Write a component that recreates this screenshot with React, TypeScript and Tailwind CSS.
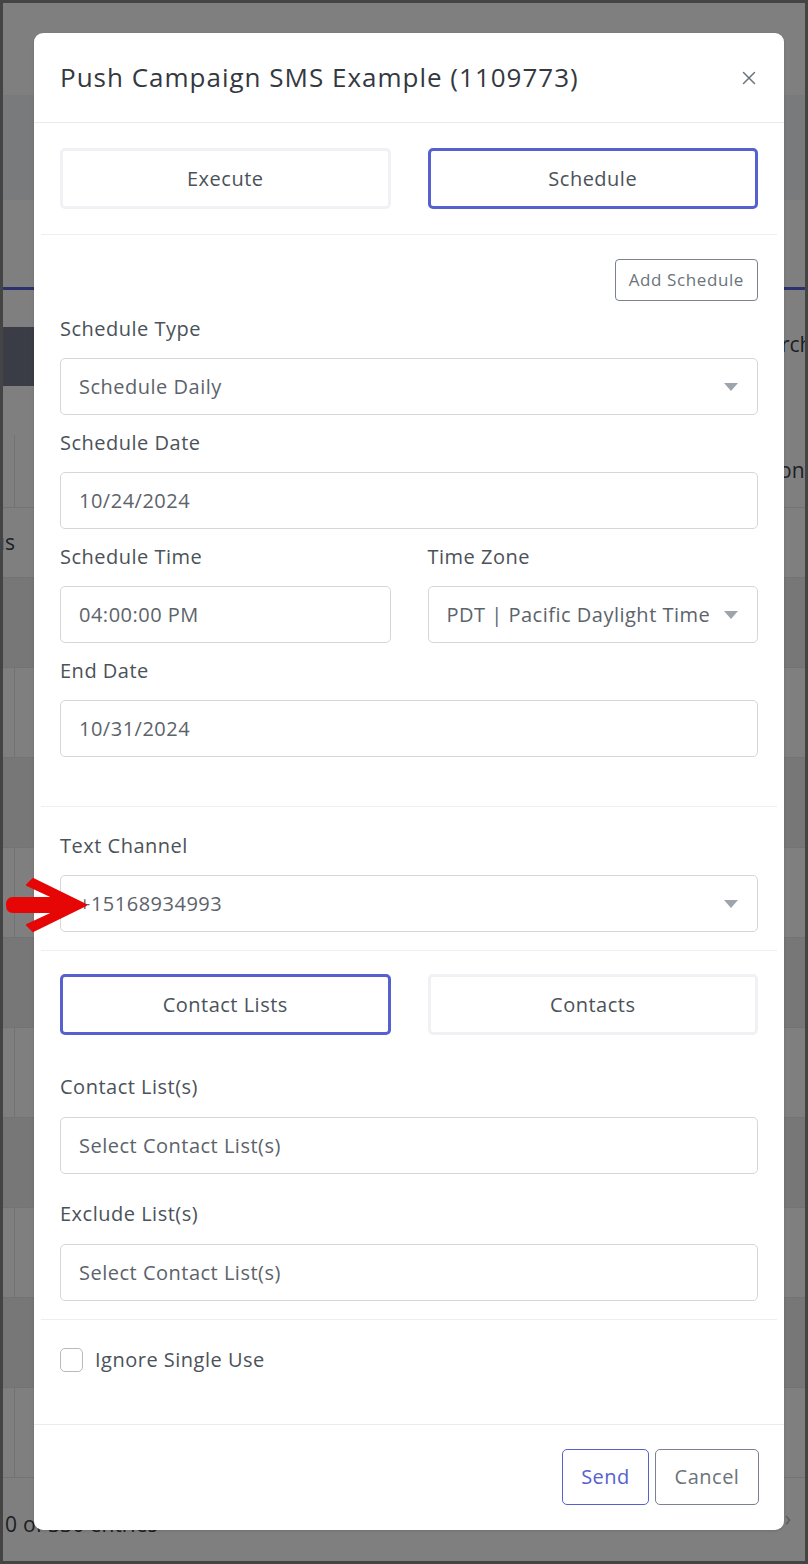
import { X } from "lucide-react";

const font = { fontFamily: "'Open Sans', Lato, sans-serif" };

function Caret() {
  return (
    <svg width="16" height="10" viewBox="0 0 16 10" className="shrink-0">
      <path d="M1 1 L15 1 L8 9 Z" fill="#9ea4ab" />
    </svg>
  );
}

function Label({ children, mb = "mb-[15px]" }: { children: React.ReactNode; mb?: string }) {
  return <div className={`${mb} text-[20px] leading-[28px] tracking-[0.5px] text-[#4b5259]`}>{children}</div>;
}

function Field({ value, select, className = "" }: { value: string; select?: boolean; className?: string }) {
  return (
    <div
      className={`flex h-[57px] items-center justify-between rounded-[5px] border border-[#d3d7dc] bg-white pl-[18px] pr-[18px] text-[20px] tracking-[0.5px] text-[#5c636b] ${className}`}
    >
      <span className="truncate">{value}</span>
      {select && <Caret />}
    </div>
  );
}

function ToggleButton({ label, active }: { label: string; active?: boolean }) {
  return (
    <button
      className={`h-[61px] flex-1 rounded-[5px] border-[3px] bg-white text-[20px] tracking-[0.5px] text-[#4b5259] ${
        active ? "border-[#5661cf]" : "border-[#eff1f4]"
      }`}
    >
      {label}
    </button>
  );
}

function Divider() {
  return <div className="mx-[7px] h-px bg-[#eceef1]" />;
}

function BgRow({ h, dark, line, children }: { h: number; dark?: boolean; line?: boolean; children?: React.ReactNode }) {
  return (
    <div
      className={`relative flex items-center border-b border-[#e4e6e9] text-[21px] text-[#3b4048] ${
        dark ? "bg-[#eeeff1]" : "bg-white"
      }`}
      style={{ height: h }}
    >
      {line && <div className="absolute left-[11px] top-0 h-full w-px bg-[#e2e4e7]" />}
      {children}
    </div>
  );
}

export default function App() {
  return (
    <div className="relative h-[1564px] w-[808px] overflow-hidden border-[3px] border-[#444444] bg-white" style={font}>
      {/* page behind the dialog */}
      <div className="flex flex-col">
        <div className="h-[92px] bg-white" />
        <div className="h-[105px] bg-[#f3f4f6]" />
        <div className="h-[87px] bg-white" />
        <div className="h-[3px] bg-[#5a60df]" />
        <div className="h-[37px] bg-white" />
        <div className="flex h-[59px] bg-white">
          <div className="flex h-full w-[40px] items-center bg-[#747b8a]">
            <div className="ml-[31px] h-[15px] w-[4px] bg-[#e0e4ea]" />
          </div>
          <span className="ml-[708px] mt-[2px] whitespace-nowrap text-[21px] text-[#3b4048]">Search</span>
        </div>
        <div className="h-[49px] bg-white" />
        <BgRow h={73} line>
          <span className="ml-[740px] whitespace-nowrap">Action</span>
        </BgRow>
        <BgRow h={70}>
          <div className="flex w-[12px] justify-end whitespace-nowrap">Status</div>
        </BgRow>
        <BgRow h={90} dark />
        <BgRow h={90} line />
        <BgRow h={90} dark />
        <BgRow h={90} line />
        <BgRow h={90} dark />
        <BgRow h={90} line />
        <BgRow h={90} dark />
        <BgRow h={90} line />
        <BgRow h={90} dark />
        <BgRow h={90} line />
        <div className="flex h-[80px] items-center bg-white pt-[14px] text-[21px] text-[#3b4048]">
          <div className="flex w-[14px] justify-end whitespace-nowrap">Showing 1 to 10</div>
          <span className="ml-[6px] whitespace-nowrap">of 330 entries</span>
          <span className="ml-auto mr-[14px] pb-[12px] text-[#b3b8bf]">›</span>
        </div>
      </div>

      {/* backdrop */}
      <div className="absolute inset-0 bg-black/50" />

      {/* dialog */}
      <div className="absolute left-[31px] top-[30px] w-[750px] rounded-[9px] bg-white shadow-sm">
        <div className="flex h-[90px] items-center justify-between border-b border-[#e9ecef] px-[26px]">
          <h2 className="text-[26px] tracking-[1px] text-[#33393f]">Push Campaign SMS Example (1109773)</h2>
          <X size={22} strokeWidth={1.6} className="mr-[-2px] text-[#6c737a]" />
        </div>

        <div className="flex gap-[37px] px-[26px] pb-[25px] pt-[25px]">
          <ToggleButton label="Execute" />
          <ToggleButton label="Schedule" active />
        </div>
        <Divider />

        <div className="px-[26px] pt-[24px] pb-[49px]">
          <div className="flex justify-end">
            <button className="h-[42px] rounded-[4px] border border-[#7b8190] px-[13px] text-[17px] tracking-[0.6px] text-[#6c737a]">
              Add Schedule
            </button>
          </div>
          <div className="mt-[14px]">
            <Label>Schedule Type</Label>
            <Field value="Schedule Daily" select className="h-[56px]" />
          </div>
          <div className="mt-[14px]">
            <Label>Schedule Date</Label>
            <Field value="10/24/2024" />
          </div>
          <div className="mt-[14px] flex gap-[37px]">
            <div className="flex-1">
              <Label>Schedule Time</Label>
              <Field value="04:00:00 PM" />
            </div>
            <div className="flex-1">
              <Label>Time Zone</Label>
              <Field value="PDT | Pacific Daylight Time" select className="h-[56px]" />
            </div>
          </div>
          <div className="mt-[14px]">
            <Label>End Date</Label>
            <Field value="10/31/2024" />
          </div>
        </div>
        <Divider />

        <div className="px-[26px] pb-[18px] pt-[25px]">
          <Label>Text Channel</Label>
          <Field value="+15168934993" select className="h-[56px]" />
        </div>
        <Divider />

        <div className="px-[26px] pb-[18px] pt-[23px]">
          <div className="flex gap-[37px]">
            <ToggleButton label="Contact Lists" active />
            <ToggleButton label="Contacts" />
          </div>
          <div className="mt-[38px]">
            <Label mb="mb-[16px]">Contact List(s)</Label>
            <Field value="Select Contact List(s)" className="h-[56px] pl-[15px]" />
          </div>
          <div className="mt-[26px]">
            <Label mb="mb-[16px]">Exclude List(s)</Label>
            <Field value="Select Contact List(s)" className="h-[56px] pl-[15px]" />
          </div>
        </div>
        <Divider />

        <div className="flex h-[104px] items-start px-[26px] pt-[26px]">
          <label className="flex items-center gap-[12px] text-[20px] leading-[28px] tracking-[0.5px] text-[#4b5259]">
            <span className="h-[24px] w-[23px] rounded-[5px] border border-[#b4bac1] bg-white" />
            Ignore Single Use
          </label>
        </div>

        <div className="flex justify-end gap-[6px] border-t border-[#e9ecef] px-[25px] pb-[25px] pt-[24px]">
          <button className="h-[56px] w-[87px] rounded-[5px] border border-[#5661cf] text-[20px] tracking-[0.5px] text-[#5661cf]">
            Send
          </button>
          <button className="h-[56px] w-[104px] rounded-[5px] border border-[#7b8190] text-[20px] tracking-[0.5px] text-[#6c737a]">
            Cancel
          </button>
        </div>
      </div>

      {/* red annotation arrow */}
      <svg className="absolute left-[2px] top-[875px]" width="84" height="54" viewBox="0 0 84 54">
        <path
          d="M28 1 L81 27 L28 53 L22 47 L50 34 L8 34 Q2 34 2 27 Q2 20 8 20 L50 20 L22 7 Z"
          fill="#e60606"
          stroke="#e60606"
          strokeLinejoin="round"
          strokeWidth="2"
        />
      </svg>
    </div>
  );
}
